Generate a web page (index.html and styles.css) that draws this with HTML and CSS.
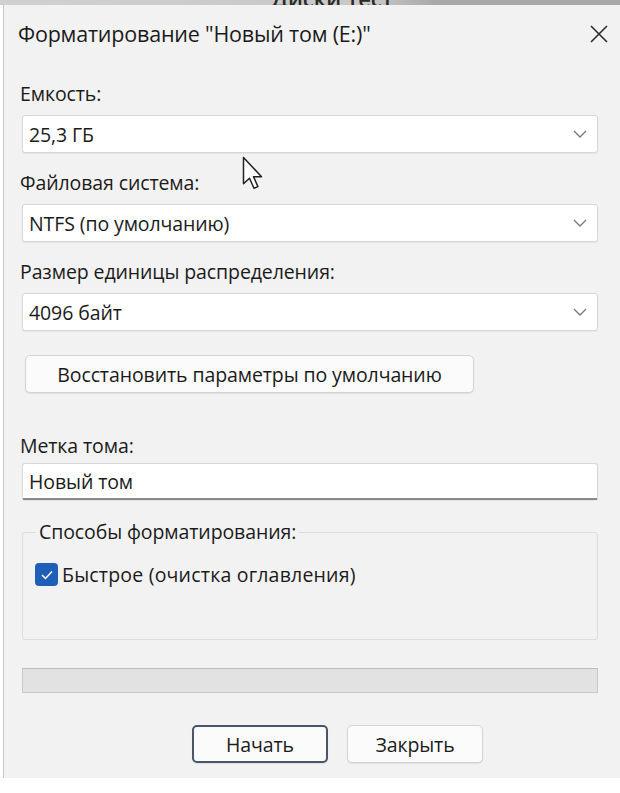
FILE: index.html
```html
<!DOCTYPE html>
<html lang="ru">
<head>
<meta charset="UTF-8">
<title>Форматирование</title>
<link rel="stylesheet" href="styles.css">
</head>
<body>
<div class="behind">
  <span class="behind-text">Диски тест</span>
</div>
<div class="dialog">
  <div class="titlebar">
    <span class="title">Форматирование "Новый том (E:)"</span>
    <svg class="close" width="20" height="20" viewBox="0 0 20 20">
      <path d="M2 2 L18 18 M18 2 L2 18" stroke="#2b2b2b" stroke-width="1.6" fill="none"/>
    </svg>
  </div>

  <label class="field-label">Емкость:</label>
  <div class="select">
    <span>25,3 ГБ</span>
    <svg class="chevron" width="14" height="8" viewBox="0 0 14 8"><path d="M1 1 L7 7 L13 1" stroke="#7a7a7a" stroke-width="1.4" fill="none"/></svg>
  </div>

  <label class="field-label">Файловая система:</label>
  <div class="select">
    <span>NTFS (по умолчанию)</span>
    <svg class="chevron" width="14" height="8" viewBox="0 0 14 8"><path d="M1 1 L7 7 L13 1" stroke="#7a7a7a" stroke-width="1.4" fill="none"/></svg>
  </div>

  <label class="field-label">Размер единицы распределения:</label>
  <div class="select">
    <span>4096 байт</span>
    <svg class="chevron" width="14" height="8" viewBox="0 0 14 8"><path d="M1 1 L7 7 L13 1" stroke="#7a7a7a" stroke-width="1.4" fill="none"/></svg>
  </div>

  <button class="btn btn-restore">Восстановить параметры по умолчанию</button>

  <label class="field-label label-volume">Метка тома:</label>
  <div class="textbox">Новый том</div>

  <fieldset class="group">
    <legend>Способы форматирования:</legend>
    <div class="check-row">
      <span class="checkbox">
        <svg width="14" height="12" viewBox="0 0 14 12"><path d="M2 6 L5.5 9.5 L12 2.5" stroke="#fff" stroke-width="1.5" fill="none"/></svg>
      </span>
      <span>Быстрое (очистка оглавления)</span>
    </div>
  </fieldset>

  <div class="progress"></div>

  <div class="actions">
    <button class="btn btn-action btn-default">Начать</button>
    <button class="btn btn-action">Закрыть</button>
  </div>
</div>

<svg class="cursor" width="24" height="36" viewBox="0 0 16 24">
  <path d="M1 1 L1 18.5 L5 14.8 L8 21.5 L10.6 20.4 L7.7 13.8 L13 13.8 Z" fill="#fff" stroke="#222" stroke-width="1" stroke-linejoin="round"/>
</svg>
</body>
</html>
```

FILE: styles.css
```css
body {
  margin: 0;
  background: #ffffff;
  font-family: 'Open Sans', 'Noto Sans', sans-serif;
  color: #1b1b1b;
  position: relative;
}
.behind {
  height: 5px;
  background: linear-gradient(90deg, #d0d0d0 0%, #c8c8c8 60%, #a9a9a9 70%, #a9a9a9 100%);
  overflow: hidden;
  display: flex;
  align-items: flex-end;
}
.behind-text {
  margin-left: 272px;
  font-size: 22px;
  font-weight: 600;
  line-height: 14px;
  color: #2a2a2a;
}
.dialog {
  background: #f2f2f2;
  border-left: 1px solid #c8c8c8;
  margin-left: 3px;
  padding: 0 22px 15px 18px;
  display: flex;
  flex-direction: column;
}
.titlebar {
  height: 57px;
  display: flex;
  align-items: center;
  justify-content: space-between;
  margin-left: -4px;
}
.title {
  font-size: 21.5px;
  letter-spacing: -0.2px;
}
.close {
  margin-right: -11px;
}
.field-label {
  display: block;
  font-size: 19.5px;
  line-height: 24px;
  margin: 18px 0 9px -2px;
  letter-spacing: -0.1px;
}
.titlebar + .field-label {
  margin-top: 20px;
}
.select, .textbox {
  height: 38px;
  box-sizing: border-box;
  background: #ffffff;
  border: 1px solid #d7d7d7;
  border-radius: 3px;
  display: flex;
  align-items: center;
  justify-content: space-between;
  padding: 0 9px 0 6px;
  font-size: 19.5px;
  letter-spacing: -0.1px;
  box-shadow: 0 1px 1px rgba(0, 0, 0, 0.06);
}
.chevron {
  margin-right: 1px;
}
.btn {
  font-family: inherit;
  font-size: 19.5px;
  letter-spacing: -0.1px;
  color: #1b1b1b;
  background: #fbfbfb;
  border: 1px solid #d3d3d3;
  border-radius: 5px;
  height: 38px;
  padding: 0;
  box-shadow: 0 1px 1px rgba(0, 0, 0, 0.08);
}
.btn-restore {
  align-self: flex-start;
  width: 449px;
  margin: 24px 0 0 3px;
}
.label-volume {
  margin-top: 41px;
  margin-bottom: 5px;
}
.textbox {
  height: 37px;
  border-bottom: 2px solid #8a8a8a;
  border-radius: 3px 3px 2px 2px;
}
.group {
  margin: 20px 0 0 0;
  border: 1px solid #dcdcdc;
  border-radius: 3px;
  height: 120px;
  box-sizing: border-box;
  padding: 17px 12px 0 12px;
}
.group legend {
  font-size: 19.5px;
  letter-spacing: -0.1px;
  line-height: 24px;
  padding: 0 3px;
  margin-left: 1px;
}
.check-row {
  display: flex;
  align-items: center;
  gap: 4px;
  font-size: 19.5px;
  letter-spacing: 0.2px;
}
.checkbox {
  width: 23px;
  height: 23px;
  border-radius: 4px;
  background: #1e5fb8;
  display: flex;
  align-items: center;
  justify-content: center;
}
.progress {
  margin-top: 28px;
  height: 25px;
  box-sizing: border-box;
  background: #e2e2e2;
  border: 1px solid #c9c9c9;
  border-top-color: #bdbdbd;
}
.actions {
  margin-top: 32px;
  display: flex;
  gap: 19px;
  padding-left: 170px;
}
.btn-action {
  width: 136px;
}
.btn-default {
  border: 2px solid #48566a;
}
.cursor {
  position: absolute;
  left: 242px;
  top: 156px;
}
```
